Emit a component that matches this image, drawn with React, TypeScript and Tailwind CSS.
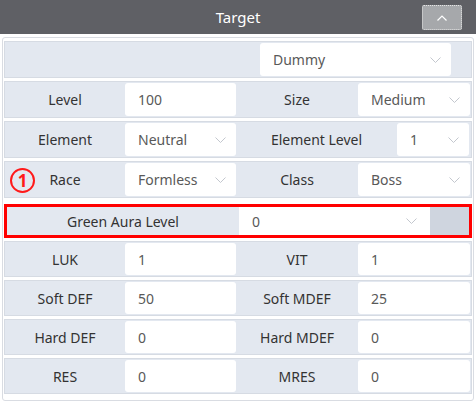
import React from "react";

const font = { fontFamily: '"Noto Sans", "Open Sans", sans-serif' };

const Down = () => (
  <svg width="11" height="6" viewBox="0 0 11 6" fill="none" stroke="#c3c7ce" strokeWidth="1">
    <path d="M0.5 0.5 L5.5 5.5 L10.5 0.5" />
  </svg>
);

const Label = ({ text }: { text: string }) => (
  <div className="flex items-center justify-center text-[14px] text-[#333]">{text}</div>
);

const Field = ({ value, select }: { value: string; select?: boolean }) => (
  <div className="flex items-center justify-between bg-white rounded-[3px] my-[1px] pl-[13px] pr-[10px] text-[14px] text-[#595959]">
    <span>{value}</span>
    {select && <Down />}
  </div>
);

const rowCls = "grid bg-[#e3e8f0] border border-[#d6dbe3] pr-[2px]";

export default function App() {
  return (
    <div className="w-[476px] h-[404px] bg-white overflow-hidden" style={font}>
      <div className="relative h-[34px] bg-[#5f6065] flex items-center justify-center">
        <span className="text-white text-[15px]">Target</span>
        <button className="absolute right-[14px] top-[5px] w-[40px] h-[25px] bg-[#a6a8ab] rounded-[2px] border border-dotted border-[#e6e6e6] flex items-center justify-center">
          <svg width="10" height="6" viewBox="0 0 10 6" fill="none" stroke="#ffffff" strokeWidth="1.2">
            <path d="M0.5 5.5 L5 1 L9.5 5.5" />
          </svg>
        </button>
      </div>

      <div className="mt-[3px] mx-[2px] border border-[#d9dce2] rounded-[3px] px-[1px] pt-[3px] pb-[6px] flex flex-col gap-[3px]">
        <div className="flex h-[37px] bg-[#e3e8f0] border border-[#d6dbe3]">
          <div className="ml-[255px] w-[191px] flex items-center justify-between bg-white rounded-[3px] my-[1px] pl-[13px] pr-[10px] text-[14px] text-[#595959]">
            <span>Dummy</span>
            <Down />
          </div>
        </div>

        <div className={`${rowCls} h-[37px] grid-cols-[120px_111px_122px_112px]`}>
          <Label text="Level" />
          <Field value="100" />
          <Label text="Size" />
          <Field value="Medium" select />
        </div>

        <div className={`${rowCls} h-[37px] grid-cols-[120px_111px_161px_72px]`}>
          <Label text="Element" />
          <Field value="Neutral" select />
          <Label text="Element Level" />
          <Field value="1" select />
        </div>

        <div className={`${rowCls} relative h-[37px] grid-cols-[120px_111px_122px_112px]`}>
          <Label text="Race" />
          <Field value="Formless" select />
          <Label text="Class" />
          <Field value="Boss" select />
          <span className="absolute left-[5px] top-[6px] w-[25px] h-[25px] rounded-full border-[2.5px] border-[#ff1a1a] text-[#ff1a1a] font-bold text-[17px] leading-none flex items-center justify-center">
            1
          </span>
        </div>

        <div className="mt-[3px] h-[34px] border-[3px] border-[#ff0000] flex">
          <div className="w-[232px] bg-[#e3e8f0] flex items-center justify-center text-[14px] text-[#333]">
            Green Aura Level
          </div>
          <div className="w-[191px] flex items-center justify-between bg-white pl-[13px] pr-[13px] text-[14px] text-[#595959]">
            <span>0</span>
            <Down />
          </div>
          <div className="flex-1 bg-[#cfd5df]" />
        </div>

        <div className={`${rowCls} h-[36px] grid-cols-[120px_111px_122px_112px]`}>
          <Label text="LUK" />
          <Field value="1" />
          <Label text="VIT" />
          <Field value="1" />
        </div>

        <div className={`${rowCls} h-[36px] grid-cols-[120px_111px_122px_112px]`}>
          <Label text="Soft DEF" />
          <Field value="50" />
          <Label text="Soft MDEF" />
          <Field value="25" />
        </div>

        <div className={`${rowCls} h-[36px] grid-cols-[120px_111px_122px_112px]`}>
          <Label text="Hard DEF" />
          <Field value="0" />
          <Label text="Hard MDEF" />
          <Field value="0" />
        </div>

        <div className={`${rowCls} h-[36px] grid-cols-[120px_111px_122px_112px]`}>
          <Label text="RES" />
          <Field value="0" />
          <Label text="MRES" />
          <Field value="0" />
        </div>
      </div>
    </div>
  );
}
